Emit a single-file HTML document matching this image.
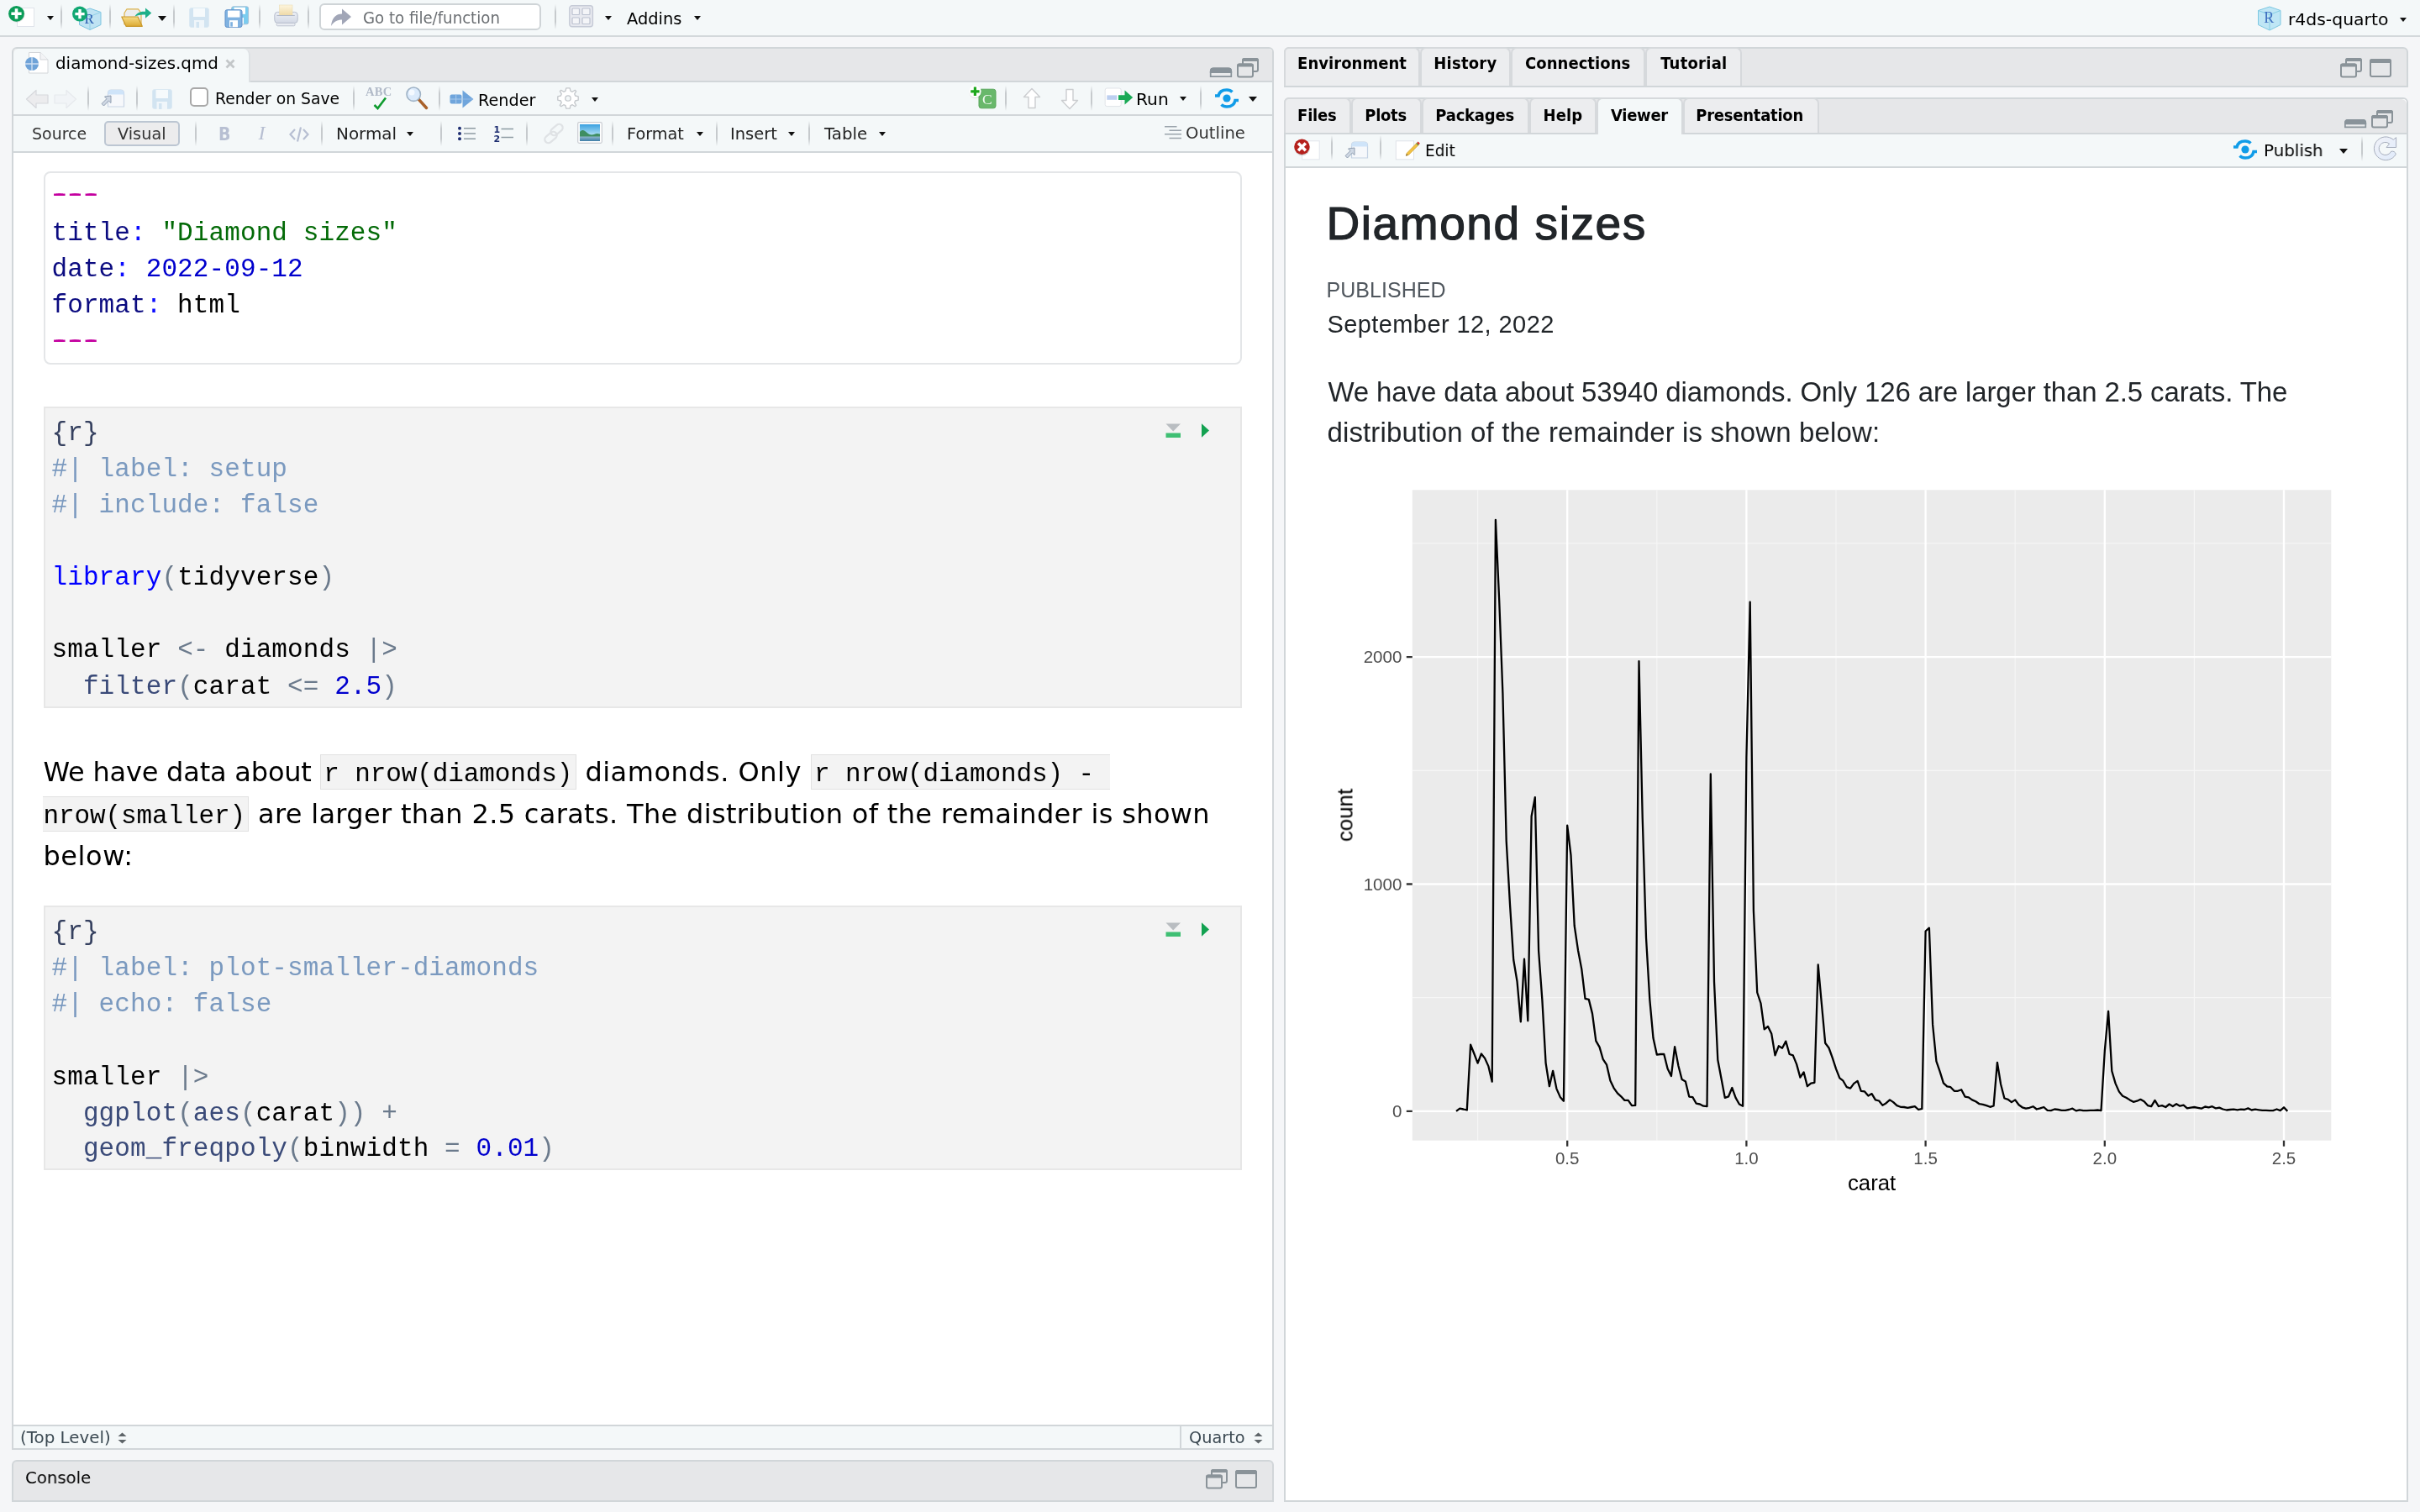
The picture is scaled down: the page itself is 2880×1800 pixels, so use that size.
<!DOCTYPE html>
<html lang="en">
<head>
<meta charset="utf-8">
<title>RStudio - diamond-sizes.qmd</title>
<style>
html,body{margin:0;padding:0;}
body{width:2880px;height:1800px;overflow:hidden;background:#f5f6f8;position:relative;will-change:transform;
  font-family:"DejaVu Sans Condensed","DejaVu Sans","Liberation Sans",sans-serif;font-size:20px;color:#000;}
*{box-sizing:border-box;}
.abs{position:absolute;}
.t{position:absolute;white-space:pre;line-height:normal;}
.b{font-weight:bold;}
.u{font-family:"DejaVu Sans","Liberation Sans",sans-serif;font-size:20px;letter-spacing:0;transform-origin:0 0;}
.sep{position:absolute;width:2px;height:30px;background:linear-gradient(to bottom,rgba(200,204,208,0),#c6cacd 30%,#c6cacd 70%,rgba(200,204,208,0));}
.dd{position:absolute;width:0;height:0;border-left:5px solid transparent;border-right:5px solid transparent;border-top:6px solid #111;}
svg{position:absolute;overflow:visible;}
/* top toolbar */
#topbar{left:0;top:0;width:2880px;height:44px;background:#f4f8f9;border-bottom:2px solid #d3d8db;}
/* panes */
.pane{position:absolute;border:2px solid #d1d6d9;background:#fff;}
.tabstrip{position:absolute;background:#e6e7e9;}
.tb{position:absolute;background:#f4f8f9;}
.hline{position:absolute;height:2px;background:#d1d6d9;}
.vline{position:absolute;width:2px;background:#d1d6d9;}
.tab{position:absolute;background:#ecedef;border:2px solid #d6d9dc;border-bottom:none;border-radius:7px 7px 0 0;}
.tab.act{background:#f4f8f9;}
</style>
</head>
<body>
<!-- ============ TOP TOOLBAR ============ -->
<div id="topbar" class="abs"></div>
<!-- ============ TOP TOOLBAR CONTENT ============ -->
<!-- new file -->
<svg style="left:8px;top:4px" width="40" height="34" viewBox="0 0 40 34">
  <rect x="12.5" y="5.5" width="20" height="22" fill="#fff" stroke="#dfe3ea" stroke-width="1"/>
  <circle cx="12" cy="13" r="9.6" fill="rgba(0,0,0,0.12)"/>
  <circle cx="11.5" cy="12.3" r="9.4" fill="#0b9d58"/>
  <path d="M11.5 6.2v12.2M5.4 12.3h12.2" stroke="#fff" stroke-width="3.6" fill="none"/>
</svg>
<div class="dd" style="left:56px;top:19px;border-left-width:4.5px;border-right-width:4.5px;border-top-width:5.5px"></div>
<div class="sep" style="left:72px;top:5px;"></div>
<!-- new project -->
<svg style="left:84px;top:4px" width="40" height="34" viewBox="0 0 40 34">
  <path d="M23 6 L36 10.5 L36 25.5 L23 31.5 L10.5 25.5 L10.5 10.5 Z" fill="#bfe3f3" stroke="#7cc4e0" stroke-width="1"/>
  <path d="M23 15.5 L36 10.5 M23 15.5 L10.5 10.5 M23 15.5 V31.5" stroke="#8fcfe6" stroke-width="1" fill="none"/>
  <text x="16.5" y="24" font-family="Liberation Serif, serif" font-size="17" fill="#2a5db0">R</text>
  <circle cx="11" cy="12.6" r="9" fill="#12a873"/>
  <path d="M11 7v11.2M5.4 12.6h11.2" stroke="#fff" stroke-width="3.4" fill="none"/>
</svg>
<div class="sep" style="left:130px;top:5px;"></div>
<!-- open folder -->
<svg style="left:142px;top:6px" width="42" height="30" viewBox="0 0 42 30">
  <defs><linearGradient id="fld" x1="0" y1="0" x2="0" y2="1"><stop offset="0" stop-color="#f7dc86"/><stop offset="1" stop-color="#dcaa33"/></linearGradient></defs>
  <path d="M6 9.500 L9 4.800 H22.500 L26 9.500 V23 H6 Z" fill="#ededed" stroke="#dcb24a" stroke-width="1.200" stroke-linejoin="round"/>
  <path d="M2.800 14 H22 L27.300 25.300 H8 Z" fill="url(#fld)" stroke="#c9982b" stroke-width="1.200" stroke-linejoin="round"/>
  <path d="M18.500 13.500 C21.500 8.500 26.500 7.200 31 7.800 V3.500 L38.300 9.600 L31 15.700 V11.600 C26.500 11 22.500 11.800 18.500 13.500Z" fill="#1fb089"/>
</svg>
<div class="dd" style="left:188px;top:19px;"></div>
<div class="sep" style="left:206px;top:5px;"></div>
<!-- save (disabled) -->
<svg style="left:225px;top:9px" width="24" height="24" viewBox="0 0 24 24">
  <rect x="0.5" y="0.5" width="23" height="23" rx="2.5" fill="#d2e4f1" stroke="#dbe9f3"/>
  <rect x="5" y="1" width="14" height="10" fill="#f6fafc"/>
  <rect x="6" y="15" width="12" height="9" fill="#f0f6fa"/>
  <rect x="8.5" y="17" width="3.5" height="7" fill="#d2e4f1"/>
</svg>
<!-- save all -->
<svg style="left:267px;top:7px" width="30" height="26" viewBox="0 0 30 26">
  <rect x="8.600" y="0.800" width="20" height="21" rx="2.200" fill="#7bccef" stroke="#a4bfd6" stroke-width="1"/>
  <rect x="11.500" y="1.800" width="13.500" height="8" fill="#ffffff"/>
  <rect x="18" y="14" width="5" height="7.500" fill="#ffffff"/>
  <rect x="1" y="4.700" width="20" height="20.700" rx="2.200" fill="#7fb2e1" stroke="#5f90c9" stroke-width="1"/>
  <rect x="4" y="5.600" width="14.400" height="8" fill="#fff"/>
  <rect x="6" y="17.200" width="10" height="8" fill="#fff"/>
  <rect x="7.200" y="19.200" width="2.700" height="5.500" fill="#7fb2e1"/>
</svg>
<div class="sep" style="left:308px;top:5px;"></div>
<!-- print -->
<svg style="left:326px;top:5px" width="30" height="27" viewBox="0 0 30 27">
  <defs><linearGradient id="ppr" x1="0" y1="0" x2="0" y2="1"><stop offset="0" stop-color="#fdf5de"/><stop offset="1" stop-color="#efdaa8"/></linearGradient>
  <linearGradient id="pbd" x1="0" y1="0" x2="0" y2="1"><stop offset="0" stop-color="#eceff5"/><stop offset="1" stop-color="#d3d9e5"/></linearGradient></defs>
  <rect x="0.800" y="9.400" width="27.400" height="13" rx="3.600" fill="url(#pbd)" stroke="#b7becd" stroke-width="1"/>
  <rect x="6.500" y="1" width="15.500" height="12" fill="url(#ppr)" stroke="#ecdcb4" stroke-width="0.600"/>
  <path d="M3.500 13.500 H24.800" stroke="#aab2c2" stroke-width="0.900"/>
  <rect x="3.200" y="22.400" width="21.800" height="3.400" rx="1.200" fill="#e9ecf2" stroke="#b9bfcd" stroke-width="0.900"/>
</svg>
<div class="sep" style="left:366px;top:5px;"></div>
<!-- search box -->
<div class="abs" style="left:380px;top:4px;width:264px;height:32px;background:#fff;border:2px solid #cfd4d7;border-radius:6px;"></div>
<svg style="left:393px;top:9px" width="26" height="23" viewBox="0 0 26 23">
  <path d="M1 22 C2 12 7 7.5 14 7.5 V1.5 L25 11 L14 20.5 V14.5 C8.5 14.5 4.5 16.5 1 22Z" fill="#a1a6b7"/>
</svg>
<div class="sep" style="left:660px;top:5px;"></div>
<!-- grid / panes icon -->
<svg style="left:677px;top:6px" width="30" height="27" viewBox="0 0 30 27">
  <rect x="0.8" y="0.8" width="27.6" height="25" rx="3" fill="#e7e9ef" stroke="#c5cad6" stroke-width="1.4"/>
  <rect x="4" y="4" width="8.5" height="7.5" rx="1" fill="#f4f5f8" stroke="#bcc2d0" stroke-width="1.2"/>
  <rect x="16" y="4" width="9" height="7.5" rx="1" fill="#f4f5f8" stroke="#bcc2d0" stroke-width="1.2"/>
  <rect x="4" y="15" width="8.5" height="7.5" rx="1" fill="#f4f5f8" stroke="#bcc2d0" stroke-width="1.2"/>
  <rect x="16" y="15" width="9" height="7.5" rx="1" fill="#f4f5f8" stroke="#bcc2d0" stroke-width="1.2"/>
</svg>
<div class="dd" style="left:719.5px;top:19px;border-left-width:4.5px;border-right-width:4.5px;border-top-width:5.5px"></div>
<div class="dd" style="left:825.5px;top:19px;border-left-width:4.5px;border-right-width:4.5px;border-top-width:5.5px"></div>
<!-- project icon -->
<svg style="left:2686px;top:7px" width="30" height="30" viewBox="0 0 30 30">
  <path d="M15 1 L28 5.5 L28 22.5 L15 29 L1.5 22.5 L1.5 5.5 Z" fill="#bfe6f5" stroke="#7cc8e2" stroke-width="1"/>
  <path d="M15 10.5 L28 5.5 M15 10.5 L1.5 5.5 M15 10.5 V29" stroke="#86cfe4" stroke-width="1" fill="none"/>
  <text x="8.3" y="20" font-family="Liberation Serif, serif" font-size="18" fill="#3e6fc0">R</text>
</svg>
<div class="dd" style="left:2856px;top:21px;border-left-width:4.5px;border-right-width:4.5px;border-top-width:5.5px"></div>


<!-- ============ LEFT: SOURCE PANE ============ -->
<div id="srcpane" class="pane" style="left:14px;top:56px;width:1502px;height:1670px;border-radius:6px 6px 0 0;"></div>
<div class="tabstrip" style="left:16px;top:58px;width:1498px;height:38px;border-radius:4px 4px 0 0;"></div>
<div class="hline" style="left:16px;top:96px;width:1498px;"></div>
<div class="tb" style="left:16px;top:98px;width:1498px;height:38px;"></div>
<div class="hline" style="left:16px;top:136px;width:1498px;"></div>
<div class="tb" style="left:16px;top:138px;width:1498px;height:42px;"></div>
<div class="hline" style="left:16px;top:180px;width:1498px;"></div>

<!-- ============ SOURCE PANE HEADER ============ -->
<!-- active file tab -->
<div class="abs" style="left:16px;top:58px;width:282px;height:40px;background:#f4f8f9;border-right:2px solid #dde1e4;border-radius:6px 8px 0 0;"></div>
<svg style="left:29px;top:61px" width="30" height="28" viewBox="0 0 30 28">
  <path d="M5.5 1.5 H19 L28 10 V26 H5.5 Z" fill="#fff" stroke="#d3d6da" stroke-width="1"/>
  <path d="M19 1.5 V10 H28" fill="#f3f4f6" stroke="#d3d6da" stroke-width="1"/>
  <circle cx="9" cy="15" r="8" fill="#6fa3d8"/>
  <path d="M9 7v16M1 15h16" stroke="#cfe0f2" stroke-width="1.4"/>
</svg>
<svg style="left:268px;top:70px" width="12" height="12" viewBox="0 0 12 12"><path d="M1.5 1.5l9 9M10.5 1.5l-9 9" stroke="#c3c7c9" stroke-width="2.8" fill="none"/></svg>
<!-- tab bar window buttons -->
<svg style="left:1439px;top:68px" width="60" height="25" viewBox="0 0 60 25">
  <path d="M1.700 23.200 V17 Q1.700 13.400 5.300 13.400 H22.700 Q26.300 13.400 26.300 17 V23.200 Z" fill="#e9eaec" stroke="#89939a" stroke-width="1.700"/>
  <path d="M1.700 18.200 V17 Q1.700 13.400 5.300 13.400 H22.700 Q26.300 13.400 26.300 17 V18.200 Z" fill="#89939a" stroke="#89939a" stroke-width="1.700"/>
  <rect x="40" y="2" width="18" height="15" rx="2" fill="#e6e7e9" stroke="#8a9399" stroke-width="2"/>
  <path d="M39 5 V4 Q39 1 42 1 H56 Q59 1 59 4 V5Z" fill="#8a9399"/>
  <rect x="34" y="8.5" width="18" height="15" rx="2" fill="#e6e7e9" stroke="#8a9399" stroke-width="2"/>
  <path d="M33 11.5 V10.5 Q33 7.5 36 7.5 H50 Q53 7.5 53 10.5 V11.5Z" fill="#8a9399"/>
</svg>
<!-- row 2: back / forward -->
<svg style="left:30px;top:106px" width="62" height="24" viewBox="0 0 62 24">
  <path d="M1.5 12 L13 1.5 V7 H27 V17 H13 V22.5 Z" fill="#ececee" stroke="#d6d8dc" stroke-width="1.2" stroke-linejoin="round"/>
  <path d="M60.500 12 L49 1.5 V7 H35 V17 H49 V22.5 Z" fill="#f1f4f7" stroke="#e6e9ed" stroke-width="1.2" stroke-linejoin="round"/>
</svg>
<div class="sep" style="left:104px;top:102px;"></div>
<!-- show in new window -->
<svg style="left:120px;top:106px" width="30" height="23" viewBox="0 0 30 23">
  <path d="M8.500 21 V5 Q8.500 1 12.500 1 H23.500 Q27.500 1 27.500 5 V21 Z" fill="#f6f8fb" stroke="#c9d6e6" stroke-width="1.2"/>
  <path d="M8.500 6.500 V5 Q8.500 1 12.500 1 H23.500 Q27.500 1 27.500 5 V6.500 Z" fill="#cfe4f9"/>
  <path d="M12 8 V16.500 L9.400 14 L3.500 20 L1 17.500 L7 11.600 L4.500 9 Z" fill="#cfd8e4" stroke="#8f9db0" stroke-width="1"/>
</svg>
<div class="sep" style="left:162px;top:102px;"></div>
<!-- save (disabled) -->
<svg style="left:181px;top:106px" width="24" height="24" viewBox="0 0 24 24">
  <rect x="0.5" y="0.5" width="23" height="23" rx="2.500" fill="#d2e4f1" stroke="#dbe9f3"/>
  <rect x="4.500" y="1" width="14.500" height="10" fill="#f6fafc"/>
  <rect x="5.500" y="15" width="12.500" height="9" fill="#f0f6fa"/>
  <rect x="8" y="17" width="3.500" height="7" fill="#d2e4f1"/>
</svg>
<!-- checkbox -->
<div class="abs" style="left:226px;top:104px;width:22px;height:23px;background:#fff;border:2px solid #a9a9a9;border-radius:5px;"></div>
<div class="sep" style="left:420px;top:102px;"></div>
<!-- spellcheck -->
<div class="t" style="left:435px;top:100.500px;font-family:'Liberation Serif',serif;font-weight:bold;font-size:14.500px;color:#b1bac8;letter-spacing:0.3px;">ABC</div>
<svg style="left:444px;top:115px" width="17" height="16" viewBox="0 0 17 16"><path d="M1.500 10 L5.500 14 L15 1.500" stroke="#0e9b2e" stroke-width="2.600" fill="none" stroke-linejoin="miter"/></svg>
<!-- find -->
<svg style="left:482px;top:102px" width="30" height="30" viewBox="0 0 30 30">
  <path d="M16 16 L25.500 26.500" stroke="#a9612a" stroke-width="3.400" stroke-linecap="round"/>
  <circle cx="10.200" cy="10.200" r="8.200" fill="#dbeafb" stroke="#9fb3c6" stroke-width="1.600"/>
  <circle cx="8" cy="8" r="3.500" fill="#f4f9ff"/>
</svg>
<div class="sep" style="left:522px;top:102px;"></div>
<!-- render icon -->
<svg style="left:535px;top:107px" width="30" height="23" viewBox="0 0 30 23">
  <rect x="0.500" y="5.500" width="14" height="11" rx="2" fill="#6fa5dc"/>
  <path d="M0.500 11 H14.500 M7.700 5.500 V16.500" stroke="#a9c9eb" stroke-width="1"/>
  <path d="M15.500 0.500 L28.500 11 L15.500 21.500 Z" fill="#6fa5dc"/>
  <path d="M15.500 11 H28" stroke="#9cc0e8" stroke-width="0.800"/>
</svg>
<!-- gear -->
<svg style="left:663px;top:104px" width="26" height="26" viewBox="-13 -13 26 26">
  <g fill="#fff" stroke="#c3c7cb" stroke-width="1.300">
  <path id="gearp" d="M-2.200 -12.200 H2.200 L3 -8.600 L5.200 -7.700 L8.300 -9.700 L9.700 -8.300 L7.700 -5.200 L8.600 -3 L12.200 -2.200 V2.200 L8.600 3 L7.700 5.200 L9.700 8.300 L8.300 9.700 L5.200 7.700 L3 8.600 L2.200 12.200 H-2.200 L-3 8.600 L-5.200 7.700 L-8.300 9.700 L-9.700 8.300 L-7.700 5.200 L-8.600 3 L-12.200 2.200 V-2.200 L-8.600 -3 L-7.700 -5.200 L-9.700 -8.300 L-8.300 -9.700 L-5.200 -7.700 L-3 -8.600 Z" stroke-linejoin="round"/>
  <circle r="3.200" fill="#f4f8f9"/>
  </g>
</svg>
<div class="dd" style="left:704px;top:115.500px;border-left-width:4px;border-right-width:4px;border-top-width:5px"></div>
<!-- insert chunk -->
<svg style="left:1153px;top:101px" width="34" height="30" viewBox="0 0 34 30">
  <rect x="12" y="5.200" width="20" height="22.600" rx="2.800" fill="#69b86b" stroke="#58a75a" stroke-width="1"/>
  <text x="16" y="22.600" font-family="Liberation Serif, serif" font-size="17.500" fill="#f4fbf4">C</text>
  <circle cx="7.600" cy="8.300" r="7.600" fill="rgba(0,0,0,0.100)"/>
  <circle cx="7.400" cy="7.800" r="7.300" fill="#fff"/>
  <path d="M7.400 2.600 V13 M2.200 7.800 H12.600" stroke="#1ea81e" stroke-width="3.200"/>
</svg>
<div class="sep" style="left:1196px;top:102px;"></div>
<!-- up / down -->
<svg style="left:1217px;top:104px" width="68" height="26" viewBox="0 0 68 26">
  <path d="M11 1.500 L20.500 11.500 H15 V24.500 H7 V11.500 H1.500 Z" fill="#ffffff" stroke="#cbcdd0" stroke-width="1.400" stroke-linejoin="round"/>
  <path d="M56 25.500 L65.500 15.500 H60 V2.500 H52 V15.500 H46.500 Z" fill="#ffffff" stroke="#cbcdd0" stroke-width="1.400" stroke-linejoin="round"/>
</svg>
<div class="sep" style="left:1298px;top:102px;"></div>
<!-- run -->
<svg style="left:1314px;top:104px" width="35" height="24" viewBox="0 0 35 24">
  <rect x="1.200" y="1" width="19" height="21.600" rx="2.200" fill="#fff" stroke="#e1e4e8" stroke-width="1"/>
  <rect x="3.300" y="9.400" width="12" height="5.400" fill="#bccff0"/>
  <path d="M17 9.300 H24.500 V3.500 L34.200 12 L24.500 20.400 V15 H17 Z" fill="#19a955"/>
</svg>
<div class="dd" style="left:1404px;top:115px;border-left-width:4.500px;border-right-width:4.500px;border-top-width:5.500px"></div>
<div class="sep" style="left:1428px;top:102px;"></div>
<!-- publish icon -->
<svg style="left:1445px;top:105px" width="30" height="24" viewBox="0 0 30 24">
  <g fill="none" stroke="#109ce8" stroke-width="3.600">
  <path d="M1 9 H5 C6 4.500 10 2 15 2 C18 2 20 3 21.500 4.500"/>
  <path d="M29 14.500 H25 C24 19.500 20 22 15 22 C12 22 10 21 8.500 19.500"/>
  </g>
  <circle cx="15" cy="12" r="4.600" fill="#109ce8"/>
</svg>
<div class="dd" style="left:1485.500px;top:115px;"></div>
<!-- row 3 -->
<div class="abs" style="left:124px;top:144px;width:90px;height:29.500px;background:#ececed;border:2px solid #bcc6d2;border-radius:5px;"></div>
<div class="sep" style="left:232px;top:144px;"></div>
<div class="t" style="left:260px;top:147.600px;font-family:'DejaVu Sans Condensed',sans-serif;font-weight:bold;font-size:21px;color:#b7bfd2;">B</div>
<div class="t" style="left:307.500px;top:145px;font-family:'Liberation Serif',serif;font-style:italic;font-size:24px;color:#b7bfd2;">I</div>
<svg style="left:344px;top:151px" width="24" height="18" viewBox="0 0 24 18"><path d="M7 3 L1.500 9 L7 15 M17 3 L22.500 9 L17 15 M14 0.500 L10 17.500" stroke="#b7bfd2" stroke-width="2.200" fill="none"/></svg>
<div class="sep" style="left:382px;top:144px;"></div>
<div class="dd" style="left:484px;top:157px;border-left-width:4.500px;border-right-width:4.500px;border-top-width:5.500px"></div>
<div class="sep" style="left:524px;top:144px;"></div>
<!-- bullet list -->
<svg style="left:544px;top:150px" width="24" height="18" viewBox="0 0 24 18">
  <g fill="#1f2f72"><circle cx="3" cy="2.800" r="2"/><circle cx="3" cy="9" r="2"/><circle cx="3" cy="15.200" r="2"/></g>
  <path d="M8 2.800 H22 M8 9 H22 M8 15.200 H22" stroke="#8d9ba3" stroke-width="1.600"/>
</svg>
<!-- numbered list -->
<svg style="left:587px;top:148px" width="26" height="22" viewBox="0 0 26 22">
  <text x="0.500" y="9.500" font-family="DejaVu Sans, sans-serif" font-weight="bold" font-size="11" fill="#1f2f72">1</text>
  <text x="0.500" y="20.500" font-family="DejaVu Sans, sans-serif" font-weight="bold" font-size="11" fill="#1f2f72">2</text>
  <path d="M9.500 5.500 H24 M9.500 15.500 H24" stroke="#8d9ba3" stroke-width="1.600"/>
</svg>
<div class="sep" style="left:626px;top:144px;"></div>
<!-- link (disabled) -->
<svg style="left:646px;top:147px" width="26" height="24" viewBox="0 0 26 24">
  <g fill="none" stroke="#dfe2e5" stroke-width="2.300">
  <rect x="8.500" y="3.200" width="16" height="8.600" rx="4.300" transform="rotate(-40 16.500 7.500)"/>
  <rect x="1.500" y="12.200" width="16" height="8.600" rx="4.300" transform="rotate(-40 9.500 16.500)"/>
  </g>
</svg>
<!-- image -->
<svg style="left:687px;top:145px" width="30" height="26" viewBox="0 0 30 26">
  <defs><linearGradient id="sky" x1="0" y1="0" x2="0" y2="1"><stop offset="0" stop-color="#3aa0e0"/><stop offset="0.600" stop-color="#a8dcf2"/></linearGradient>
  <linearGradient id="wat" x1="0" y1="0" x2="0" y2="1"><stop offset="0" stop-color="#8fb6cc"/><stop offset="1" stop-color="#3f7fa8"/></linearGradient></defs>
  <rect x="0.700" y="0.700" width="28.600" height="24.600" rx="1.500" fill="#fff" stroke="#c9ccd2" stroke-width="1.200"/>
  <rect x="3" y="3" width="24" height="20" fill="url(#sky)"/>
  <path d="M3 12 C6 9 8 9.500 11 12.500 C14 15.500 17 16 20 15 C23 13.500 25 14 27 14.500 V18 H3Z" fill="#3f8e62"/>
  <rect x="3" y="17.500" width="24" height="5.500" fill="url(#wat)"/>
</svg>
<div class="sep" style="left:728px;top:144px;"></div>
<div class="dd" style="left:828.500px;top:157px;border-left-width:4.500px;border-right-width:4.500px;border-top-width:5.500px"></div>
<div class="sep" style="left:852px;top:144px;"></div>
<div class="dd" style="left:937.500px;top:157px;border-left-width:4.500px;border-right-width:4.500px;border-top-width:5.500px"></div>
<div class="sep" style="left:962px;top:144px;"></div>
<div class="dd" style="left:1045.500px;top:157px;border-left-width:4.500px;border-right-width:4.500px;border-top-width:5.500px"></div>
<!-- outline icon -->
<svg style="left:1385px;top:149px" width="22" height="19" viewBox="0 0 22 19"><path d="M1 1.800 H15.500 M6.500 6.300 H21 M1 10.800 H21 M6.500 15.400 H21" stroke="#9aa3ab" stroke-width="1.500"/></svg>

<!-- ============ EDITOR CONTENT ============ -->
<style>
.c{position:absolute;white-space:pre;font-family:"Liberation Mono","DejaVu Sans Mono",monospace;font-size:31px;line-height:normal;letter-spacing:0.100px;color:#000;}
.k{color:#0b0b80}.co{color:#0c0cff}.s{color:#036a07}.n{color:#0000cd}.m{color:#c4009f;text-shadow:2.400px 0 0 #c4009f,-2.400px 0 0 #c4009f}
.h{color:#35405f}.cm{color:#7a99bf}.kw{color:#0000ff}.p{color:#6b7a8c}.f{color:#3a4a78}
.blk{position:absolute;left:52px;width:1426px;background:#f3f3f3;border:2px solid #e7e7e7;}
.ic{font-family:"Liberation Mono","DejaVu Sans Mono",monospace;font-size:31px;line-height:30px;letter-spacing:-0.100px;background:#f3f3f3;border:1.500px solid #e1e1e1;padding:5px 3.500px 0 3.500px;}
#para{position:absolute;left:51.4px;top:893.8px;width:1440px;font-family:"DejaVu Sans","Liberation Sans",sans-serif;font-size:32px;line-height:50px;white-space:nowrap;color:#000;}
</style>
<div class="abs" style="left:52px;top:204px;width:1426px;height:229.500px;background:#fff;border:2px solid #e4e6e8;border-radius:8px;"></div>
<div class="c" style="left:61.500px;top:213.7px;"><span class="m">---</span></div>
<div class="c" style="left:61.500px;top:260.4px;"><span class="k">title</span><span class="co">:</span> <span class="s">"Diamond sizes"</span></div>
<div class="c" style="left:61.500px;top:302.8px;"><span class="k">date</span><span class="co">:</span> <span class="n">2022-09-12</span></div>
<div class="c" style="left:61.500px;top:346.1px;"><span class="k">format</span><span class="co">:</span> html</div>
<div class="c" style="left:61.500px;top:387.6px;"><span class="m">---</span></div>
<div class="blk" style="top:484px;height:358.500px;"></div>
<div class="c" style="left:61.500px;top:498.2px;"><span class="h">{r}</span></div>
<div class="c" style="left:61.500px;top:541.0px;"><span class="cm">#| label: setup</span></div>
<div class="c" style="left:61.500px;top:583.9px;"><span class="cm">#| include: false</span></div>
<div class="c" style="left:61.500px;top:669.6px;"><span class="kw">library</span><span class="p">(</span>tidyverse<span class="p">)</span></div>
<div class="c" style="left:61.500px;top:756.3px;">smaller <span class="p">&lt;-</span> diamonds <span class="p">|&gt;</span></div>
<div class="c" style="left:61.500px;top:800.0px;">  <span class="f">filter</span><span class="p">(</span>carat <span class="p">&lt;=</span> <span class="n">2.5</span><span class="p">)</span></div>
<div class="blk" style="top:1078px;height:315px;"></div>
<div class="c" style="left:61.500px;top:1092.2px;"><span class="h">{r}</span></div>
<div class="c" style="left:61.500px;top:1135.0px;"><span class="cm">#| label: plot-smaller-diamonds</span></div>
<div class="c" style="left:61.500px;top:1177.8px;"><span class="cm">#| echo: false</span></div>
<div class="c" style="left:61.500px;top:1264.7px;">smaller <span class="p">|&gt;</span></div>
<div class="c" style="left:61.500px;top:1308.1px;">  <span class="f">ggplot</span><span class="p">(</span><span class="f">aes</span><span class="p">(</span>carat<span class="p">))</span> <span class="p">+</span></div>
<div class="c" style="left:61.500px;top:1350.3px;">  <span class="f">geom_freqpoly</span><span class="p">(</span>binwidth <span class="p">=</span> <span class="n">0.01</span><span class="p">)</span></div>
<svg style="left:1387px;top:503.5px" width="54" height="18" viewBox="0 0 54 18">
  <path d="M0.500 0.500 H18 L9.200 9.500 Z" fill="#b9bdc1"/><rect x="0.500" y="11.500" width="17.500" height="5.500" fill="#3fbf73"/>
  <path d="M43 0.300 L52 8.500 L43 16.700 Z" fill="#12a150"/></svg>
<svg style="left:1387px;top:1097.5px" width="54" height="18" viewBox="0 0 54 18">
  <path d="M0.500 0.500 H18 L9.200 9.500 Z" fill="#b9bdc1"/><rect x="0.500" y="11.500" width="17.500" height="5.500" fill="#3fbf73"/>
  <path d="M43 0.300 L52 8.500 L43 16.700 Z" fill="#12a150"/></svg>
<div id="para"><span style="letter-spacing:-0.2px">We have data about </span><span class="ic">r nrow(diamonds)</span><span style="letter-spacing:0.5px"> diamonds. Only </span><span class="ic" style="white-space:pre">r nrow(diamonds) - <br>nrow(smaller)</span><span style="letter-spacing:0.33px"> are larger than 2.5 carats. The distribution of the remainder is shown</span><br><span style="letter-spacing:0.6px">below:</span></div>
<!-- status bar -->
<div class="hline" style="left:16px;top:1696px;width:1498px;"></div>
<div class="tb" style="left:16px;top:1698px;width:1498px;height:26px;"></div>

<!-- ============ CONSOLE (collapsed) ============ -->
<div class="pane" style="left:14px;top:1738px;width:1502px;height:50px;border-radius:6px 6px 0 0;background:#e6e7e9;"></div>

<!-- ============ RIGHT TOP: ENVIRONMENT (collapsed) ============ -->
<div class="pane" style="left:1528px;top:56px;width:1338px;height:48px;border-radius:6px 6px 0 0;background:#e6e7e9;"></div>

<!-- ============ RIGHT BOTTOM: VIEWER ============ -->
<div id="viewpane" class="pane" style="left:1528px;top:116px;width:1338px;height:1672px;border-radius:6px 6px 0 0;"></div>
<div class="tabstrip" style="left:1530px;top:118px;width:1334px;height:40px;border-radius:6px 6px 0 0;"></div>
<div class="hline" style="left:1530px;top:158px;width:1334px;"></div>
<div class="tb" style="left:1530px;top:160px;width:1334px;height:38px;"></div>
<div class="hline" style="left:1530px;top:198px;width:1334px;"></div>



<!-- ============ VIEWER CONTENT ============ -->
<style>
.v{position:absolute;white-space:pre;font-family:"Liberation Sans",Arial,sans-serif;color:#212529;line-height:normal;}
</style>
<div class="v" id="v-title" style="left:1578.400px;top:234.000px;font-size:55px;letter-spacing:1.600px;-webkit-text-stroke:1.200px #212529;">Diamond sizes</div>
<div class="v" id="v-pub" style="left:1578.400px;top:331.300px;font-size:25px;letter-spacing:0.070px;color:#50575e;">PUBLISHED</div>
<div class="v" id="v-date" style="left:1579.400px;top:369.900px;font-size:29px;letter-spacing:0.420px;">September 12, 2022</div>
<div class="v" id="v-p1" style="left:1580.400px;top:448.100px;font-size:33px;letter-spacing:-0.120px;">We have data about 53940 diamonds. Only 126 are larger than 2.5 carats. The</div>
<div class="v" id="v-p2" style="left:1579.400px;top:495.700px;font-size:33px;letter-spacing:0.150px;">distribution of the remainder is shown below:</div>
<!--PLOT-START-->
<svg id="plot" style="left:1560px;top:560px" width="1260" height="880" viewBox="1560 560 1260 880" font-family="Liberation Sans, Arial, sans-serif">
<rect x="1680.8" y="583.3" width="1093.5" height="774.4" fill="#ebebeb"/>
<path d="M1758.6 583.3V1357.7M1971.8 583.3V1357.7M2185.0 583.3V1357.7M2398.2 583.3V1357.7M2611.4 583.3V1357.7M1680.8 1187.7H2774.3M1680.8 917.3H2774.3M1680.8 646.9H2774.3" stroke="#f6f6f6" stroke-width="1.200" fill="none"/>
<path d="M1865.2 583.3V1357.7M2078.4 583.3V1357.7M2291.6 583.3V1357.7M2504.8 583.3V1357.7M2718.0 583.3V1357.7M1680.8 1322.9H2774.3M1680.8 1052.5H2774.3M1680.8 782.1H2774.3" stroke="#ffffff" stroke-width="2.300" fill="none"/>
<polyline fill="none" stroke="#000" stroke-width="2.300" stroke-linejoin="round" stroke-linecap="butt" points="1733.0,1322.9 1737.3,1319.7 1741.5,1320.5 1745.8,1321.5 1750.1,1243.7 1754.3,1254.2 1758.6,1265.6 1762.9,1254.5 1767.1,1259.9 1771.4,1269.4 1775.7,1287.7 1779.9,618.8 1784.2,714.8 1788.4,825.4 1792.7,1001.4 1797.0,1076.8 1801.2,1142.5 1805.5,1168.2 1809.8,1216.4 1814.0,1141.7 1818.3,1215.3 1822.6,971.7 1826.8,949.2 1831.1,1132.0 1835.4,1190.9 1839.6,1265.6 1843.9,1293.2 1848.1,1274.8 1852.4,1296.1 1856.7,1305.9 1860.9,1310.7 1865.2,982.7 1869.5,1018.2 1873.7,1102.0 1878.0,1131.2 1882.3,1153.9 1886.5,1188.8 1890.8,1189.9 1895.0,1206.6 1899.3,1239.1 1903.6,1246.6 1907.8,1261.2 1912.1,1267.7 1916.4,1286.4 1920.6,1295.3 1924.9,1301.3 1929.2,1305.3 1933.4,1309.9 1937.7,1309.9 1942.0,1316.1 1946.2,1315.9 1950.5,787.2 1954.7,973.0 1959.0,1116.3 1963.3,1189.9 1967.5,1235.8 1971.8,1255.6 1976.1,1255.0 1980.3,1255.0 1984.6,1272.3 1988.9,1281.0 1993.1,1246.1 1997.4,1268.8 2001.6,1285.0 2005.9,1287.5 2010.2,1305.6 2014.4,1306.1 2018.7,1313.7 2023.0,1314.5 2027.2,1316.7 2031.5,1317.2 2035.8,921.4 2040.0,1168.8 2044.3,1261.8 2048.6,1284.5 2052.8,1306.9 2057.1,1305.3 2061.3,1295.0 2065.6,1306.9 2069.9,1314.5 2074.1,1316.7 2078.4,901.6 2082.7,716.7 2086.9,1084.1 2091.2,1181.5 2095.5,1194.5 2099.7,1225.3 2104.0,1222.0 2108.2,1230.4 2112.5,1256.4 2116.8,1245.3 2121.0,1247.7 2125.3,1239.6 2129.6,1255.0 2133.8,1256.4 2138.1,1266.9 2142.4,1282.6 2146.6,1276.4 2150.9,1293.2 2155.2,1289.6 2159.4,1288.8 2163.7,1148.5 2167.9,1195.0 2172.2,1241.8 2176.5,1247.5 2180.7,1259.1 2185.0,1272.3 2189.3,1283.4 2193.5,1286.7 2197.8,1294.2 2202.1,1295.6 2206.3,1289.9 2210.6,1286.9 2214.8,1298.8 2219.1,1299.4 2223.4,1304.5 2227.6,1302.1 2231.9,1309.4 2236.2,1310.5 2240.4,1315.9 2244.7,1313.2 2249.0,1309.4 2253.2,1312.1 2257.5,1316.1 2261.8,1317.8 2266.0,1318.0 2270.3,1318.8 2274.5,1318.0 2278.8,1317.2 2283.1,1321.0 2287.3,1319.9 2291.6,1108.5 2295.9,1104.7 2300.1,1219.9 2304.4,1263.4 2308.7,1275.9 2312.9,1289.4 2317.2,1293.4 2321.4,1294.2 2325.7,1298.8 2330.0,1298.8 2334.2,1297.2 2338.5,1305.6 2342.8,1306.4 2347.0,1309.4 2351.3,1311.3 2355.6,1314.2 2359.8,1314.8 2364.1,1316.1 2368.4,1317.8 2372.6,1316.4 2376.9,1264.8 2381.1,1290.7 2385.4,1307.5 2389.7,1308.8 2393.9,1312.1 2398.2,1309.4 2402.5,1315.3 2406.7,1318.3 2411.0,1319.7 2415.3,1318.8 2419.5,1317.2 2423.8,1320.5 2428.0,1319.4 2432.3,1318.0 2436.6,1321.8 2440.8,1322.1 2445.1,1320.5 2449.4,1321.0 2453.6,1321.8 2457.9,1321.8 2462.2,1321.0 2466.4,1319.7 2470.7,1322.4 2475.0,1321.3 2479.2,1322.1 2483.5,1322.1 2487.7,1321.8 2492.0,1321.8 2496.3,1321.5 2500.5,1322.1 2504.8,1251.2 2509.1,1203.9 2513.3,1275.0 2517.6,1289.9 2521.9,1299.6 2526.1,1304.8 2530.4,1306.7 2534.6,1309.4 2538.9,1311.8 2543.2,1310.7 2547.4,1308.8 2551.7,1311.3 2556.0,1316.1 2560.2,1317.2 2564.5,1309.9 2568.8,1317.0 2573.0,1316.1 2577.3,1318.0 2581.6,1314.5 2585.8,1317.0 2590.1,1314.2 2594.3,1316.7 2598.6,1315.6 2602.9,1319.4 2607.1,1318.6 2611.4,1318.0 2615.7,1318.8 2619.9,1319.7 2624.2,1317.5 2628.5,1318.3 2632.7,1317.2 2637.0,1319.4 2641.2,1318.6 2645.5,1320.5 2649.8,1321.5 2654.0,1321.0 2658.3,1320.7 2662.6,1321.3 2666.8,1320.7 2671.1,1321.0 2675.4,1319.4 2679.6,1321.5 2683.9,1320.7 2688.2,1321.3 2692.4,1321.8 2696.7,1321.8 2700.9,1322.1 2705.2,1322.1 2709.5,1320.5 2713.7,1322.1 2718.0,1318.3 2722.3,1322.9"/>
<path d="M1865.2 1357.7v7M2078.4 1357.7v7M2291.6 1357.7v7M2504.8 1357.7v7M2718.0 1357.7v7M1680.8 1322.9h-7M1680.8 1052.5h-7M1680.8 782.1h-7" stroke="#333" stroke-width="2.300" fill="none"/>
<text x="1865.2" y="1385.600" text-anchor="middle" font-size="20.500" fill="#4d4d4d">0.5</text>
<text x="2078.4" y="1385.600" text-anchor="middle" font-size="20.500" fill="#4d4d4d">1.0</text>
<text x="2291.6" y="1385.600" text-anchor="middle" font-size="20.500" fill="#4d4d4d">1.5</text>
<text x="2504.8" y="1385.600" text-anchor="middle" font-size="20.500" fill="#4d4d4d">2.0</text>
<text x="2718.0" y="1385.600" text-anchor="middle" font-size="20.500" fill="#4d4d4d">2.5</text>
<text x="1668.300" y="1330.1" text-anchor="end" font-size="20.500" fill="#4d4d4d">0</text>
<text x="1668.300" y="1059.7" text-anchor="end" font-size="20.500" fill="#4d4d4d">1000</text>
<text x="1668.300" y="789.3" text-anchor="end" font-size="20.500" fill="#4d4d4d">2000</text>
<text x="2227.6" y="1416.500" text-anchor="middle" font-size="25.800" fill="#000">carat</text>
<text transform="translate(1609.500 970.5) rotate(-90)" text-anchor="middle" font-size="25.800" fill="#000">count</text>
</svg>
<!--PLOT-END-->
<!-- ============ RIGHT PANE TABS ============ -->
<div class="tab" style="left:1528px;top:56px;width:162px;height:46px;border-radius:6px 7px 0 0;"></div>
<div class="tab" style="left:1690px;top:56px;width:108px;height:46px;"></div>
<div class="tab" style="left:1798px;top:56px;width:160px;height:46px;"></div>
<div class="tab" style="left:1958px;top:56px;width:115px;height:46px;"></div>
<svg style="left:2785px;top:68px" width="62" height="25" viewBox="0 0 62 25">
  <rect x="7" y="2" width="18" height="15" rx="2" fill="#e6e7e9" stroke="#8a9399" stroke-width="2"/>
  <path d="M6 5 V4 Q6 1 9 1 H23 Q26 1 26 4 V5Z" fill="#8a9399"/>
  <rect x="1" y="8.500" width="18" height="15" rx="2" fill="#e6e7e9" stroke="#8a9399" stroke-width="2"/>
  <path d="M0 11.500 V10.500 Q0 7.500 3 7.500 H17 Q20 7.500 20 10.500 V11.500Z" fill="#8a9399"/>
  <rect x="36" y="3" width="24" height="20" rx="2" fill="#e6e7e9" stroke="#8a9399" stroke-width="2"/>
  <path d="M35 7 V5 Q35 2 38 2 H58 Q61 2 61 5 V7Z" fill="#8a9399"/>
</svg>
<div class="tab" style="left:1528px;top:116px;width:80px;height:42px;border-radius:6px 7px 0 0;"></div>
<div class="tab" style="left:1608px;top:116px;width:84px;height:42px;"></div>
<div class="tab" style="left:1692px;top:116px;width:128px;height:42px;"></div>
<div class="tab" style="left:1820px;top:116px;width:80px;height:42px;"></div>
<div class="tab act" style="left:1900px;top:116px;width:103px;height:44px;"></div>
<div class="tab" style="left:2003px;top:116px;width:162px;height:42px;"></div>
<svg style="left:2789px;top:130px" width="60" height="25" viewBox="0 0 60 25">
  <path d="M1.900 21.400 V16.300 Q1.900 12.800 5.400 12.800 H22.800 Q26.300 12.800 26.300 16.300 V21.400 Z" fill="#e9eaec" stroke="#89939a" stroke-width="1.700"/>
  <path d="M1.900 17.400 V16.300 Q1.900 12.800 5.400 12.800 H22.800 Q26.300 12.800 26.300 16.300 V17.400 Z" fill="#89939a" stroke="#89939a" stroke-width="1.700"/>
  <rect x="40" y="2" width="18" height="14" rx="2" fill="#e6e7e9" stroke="#8a9399" stroke-width="2"/>
  <path d="M39 5 V4 Q39 1 42 1 H56 Q59 1 59 4 V5Z" fill="#8a9399"/>
  <rect x="34" y="8" width="18" height="13.500" rx="2" fill="#e6e7e9" stroke="#8a9399" stroke-width="2"/>
  <path d="M33 11 V10 Q33 7 36 7 H50 Q53 7 53 10 V11Z" fill="#8a9399"/>
</svg>
<!-- viewer toolbar -->
<svg style="left:1539px;top:164px" width="34" height="32" viewBox="0 0 34 32">
  <rect x="10.600" y="3.800" width="20.600" height="22" fill="#fff" stroke="#e2e6ec" stroke-width="1"/>
  <circle cx="10.800" cy="11.800" r="9.400" fill="rgba(0,0,0,0.160)"/>
  <circle cx="10.400" cy="10.800" r="9.200" fill="#b5201c"/>
  <path d="M6 6.400 L14.800 15.200 M14.800 6.400 L6 15.200" stroke="#fff" stroke-width="3.600"/>
</svg>
<div class="sep" style="left:1584px;top:160.500px;"></div>
<svg style="left:1600px;top:168px" width="30" height="23" viewBox="0 0 30 23">
  <path d="M8.500 20 V5 Q8.500 1 12.500 1 H23.500 Q27.500 1 27.500 5 V20 Z" fill="#f6f8fb" stroke="#c3d1e3" stroke-width="1.200"/>
  <path d="M8.500 6.500 V5 Q8.500 1 12.500 1 H23.500 Q27.500 1 27.500 5 V6.500 Z" fill="#cfe4f9"/>
  <path d="M12 8 V16.500 L9.400 14 L3.500 20 L1 17.500 L7 11.600 L4.500 9 Z" fill="#cfd8e4" stroke="#8f9db0" stroke-width="1"/>
</svg>
<div class="sep" style="left:1642px;top:160.500px;"></div>
<svg style="left:1660px;top:166px" width="32" height="26" viewBox="0 0 32 26">
  <rect x="1.300" y="1.800" width="21.200" height="22" fill="#fff" stroke="#dfe3e8" stroke-width="1"/>
  <path d="M14.200 16.300 L26 4.300 L28.300 6.500 L16.500 18.400 L13.300 19.400 Z" fill="#f2c244" stroke="#c99a2c" stroke-width="0.600"/>
  <path d="M26 4.300 L27.600 2.600 L29.900 4.800 L28.300 6.500 Z" fill="#d8382c"/>
  <path d="M25.200 5.100 L26 4.300 L28.300 6.500 L27.500 7.300 Z" fill="#3d9b4a"/>
  <path d="M13.300 19.400 L13.900 17.300 L15.300 18.700 Z" fill="#5b4b3a"/>
</svg>
<svg style="left:2657px;top:166px" width="30" height="24" viewBox="0 0 30 24">
  <g fill="none" stroke="#109ce8" stroke-width="3.600">
  <path d="M1 9 H5 C6 4.500 10 2 15 2 C18 2 20 3 21.500 4.500"/>
  <path d="M29 14.500 H25 C24 19.500 20 22 15 22 C12 22 10 21 8.500 19.500"/>
  </g>
  <circle cx="15" cy="12" r="4.600" fill="#109ce8"/>
</svg>
<div class="dd" style="left:2784px;top:177px;border-left-width:5.500px;border-right-width:5.500px;border-top-width:6px"></div>
<div class="sep" style="left:2810px;top:162px;"></div>
<svg style="left:2825px;top:162px" width="29" height="30" viewBox="0 0 29 30">
  <defs><linearGradient id="rfg" x1="0" y1="0" x2="1" y2="1"><stop offset="0" stop-color="#f1f2f8"/><stop offset="1" stop-color="#e0ebfb"/></linearGradient></defs>
  <path d="M23.300 4.300 A13.850 13.850 0 1 0 26.300 21.600 Q25 17.300 20.600 18.300 A7.600 7.600 0 1 1 18.600 9.100 L15 13.500 L26.600 13.500 L26.600 1.600 Z" fill="url(#rfg)" stroke="#a7aebd" stroke-width="1" stroke-linejoin="round"/>
</svg>

<!-- status bar content -->
<svg style="left:140px;top:1705px" width="11" height="14" viewBox="0 0 11 14"><path d="M5.500 0.500 L10.500 5 H0.500 Z M5.500 13.500 L10.500 9 H0.500 Z" fill="#5e6569"/></svg>
<div class="vline" style="left:1404px;top:1698px;height:26px;"></div>
<svg style="left:1492px;top:1705px" width="11" height="14" viewBox="0 0 11 14"><path d="M5.500 0.500 L10.500 5 H0.500 Z M5.500 13.500 L10.500 9 H0.500 Z" fill="#5e6569"/></svg>
<!-- console buttons -->
<svg style="left:1435px;top:1748px" width="62" height="25" viewBox="0 0 62 25">
  <rect x="7" y="2" width="18" height="15" rx="2" fill="#e6e7e9" stroke="#8a9399" stroke-width="2"/>
  <path d="M6 5 V4 Q6 1 9 1 H23 Q26 1 26 4 V5Z" fill="#8a9399"/>
  <rect x="1" y="8.500" width="18" height="15" rx="2" fill="#e6e7e9" stroke="#8a9399" stroke-width="2"/>
  <path d="M0 11.500 V10.500 Q0 7.500 3 7.500 H17 Q20 7.500 20 10.500 V11.500Z" fill="#8a9399"/>
  <rect x="36" y="3" width="24" height="20" rx="2" fill="#e6e7e9" stroke="#8a9399" stroke-width="2"/>
  <path d="M35 7 V5 Q35 2 38 2 H58 Q61 2 61 5 V7Z" fill="#8a9399"/>
</svg>
<!-- ============ UI LABELS ============ -->
<div class="t u" id="l-goto" style="left:431.7px;top:9.2px;transform:scaleX(0.9079);color:#6b6f73;">Go to file/function</div>
<div class="t u" id="l-addins" style="left:746.1px;top:9.6px;transform:scaleX(0.9687);">Addins</div>
<div class="t u" id="l-proj" style="left:2723.4px;top:11.2px;transform:scaleX(1.0184);">r4ds-quarto</div>
<div class="t u" id="l-tabname" style="left:66.2px;top:62.9px;transform:scaleX(0.9933);">diamond-sizes.qmd</div>
<div class="t u" id="l-ros" style="left:256.2px;top:104.6px;transform:scaleX(0.9374);">Render on Save</div>
<div class="t u" id="l-render" style="left:569.4px;top:107.4px;transform:scaleX(0.9609);">Render</div>
<div class="t u" id="l-run" style="left:1352.0px;top:105.600px;transform:scaleX(1.0086);">Run</div>
<div class="t u" id="l-source" style="left:37.9px;top:147.3px;transform:scaleX(0.9478);color:#333;">Source</div>
<div class="t u" id="l-visual" style="left:139.7px;top:147.3px;transform:scaleX(0.9638);color:#333;">Visual</div>
<div class="t u" id="l-normal" style="left:399.5px;top:147.4px;transform:scaleX(0.9957);color:#222;">Normal</div>
<div class="t u" id="l-format" style="left:746.0px;top:147.4px;transform:scaleX(0.9632);color:#222;">Format</div>
<div class="t u" id="l-insert" style="left:869.0px;top:147.4px;transform:scaleX(0.9745);color:#222;">Insert</div>
<div class="t u" id="l-table" style="left:980.6px;top:147.4px;transform:scaleX(0.9882);color:#222;">Table</div>
<div class="t u" id="l-outline" style="left:1411.0px;top:146.1px;transform:scaleX(0.9800);color:#333;">Outline</div>
<div class="t" id="l-env" style="left:1544.1px;top:62.9px;letter-spacing:0.04px;font-weight:bold;">Environment</div>
<div class="t" id="l-hist" style="left:1706.3px;top:62.9px;letter-spacing:0.22px;font-weight:bold;">History</div>
<div class="t" id="l-conn" style="left:1815.0px;top:62.9px;letter-spacing:0.05px;font-weight:bold;">Connections</div>
<div class="t" id="l-tut" style="left:1976.3px;top:62.9px;letter-spacing:0.24px;font-weight:bold;">Tutorial</div>
<div class="t" id="l-files" style="left:1544.1px;top:124.6px;letter-spacing:-0.22px;font-weight:bold;">Files</div>
<div class="t" id="l-plots" style="left:1624.3px;top:124.6px;letter-spacing:-0.30px;font-weight:bold;">Plots</div>
<div class="t" id="l-pkgs" style="left:1708.3px;top:124.6px;letter-spacing:-0.21px;font-weight:bold;">Packages</div>
<div class="t" id="l-help" style="left:1836.6px;top:124.6px;letter-spacing:0.07px;font-weight:bold;">Help</div>
<div class="t" id="l-viewer" style="left:1917.0px;top:124.6px;letter-spacing:-0.28px;font-weight:bold;">Viewer</div>
<div class="t" id="l-pres" style="left:2018.3px;top:124.6px;letter-spacing:-0.25px;font-weight:bold;">Presentation</div>
<div class="t u" id="l-edit" style="left:1696.0px;top:167.1px;transform:scaleX(0.9216);">Edit</div>
<div class="t u" id="l-publish" style="left:2693.6px;top:166.9px;transform:scaleX(0.9912);">Publish</div>
<div class="t u" id="l-toplevel" style="left:23.8px;top:1698.9px;transform:scaleX(0.9924);color:#3b4952;">(Top Level)</div>
<div class="t u" id="l-quarto" style="left:1415.0px;top:1698.9px;transform:scaleX(0.9642);color:#3b4952;">Quarto</div>
<div class="t u" id="l-console" style="left:29.8px;top:1747.4px;transform:scaleX(0.9857);">Console</div>
</body>
</html>
